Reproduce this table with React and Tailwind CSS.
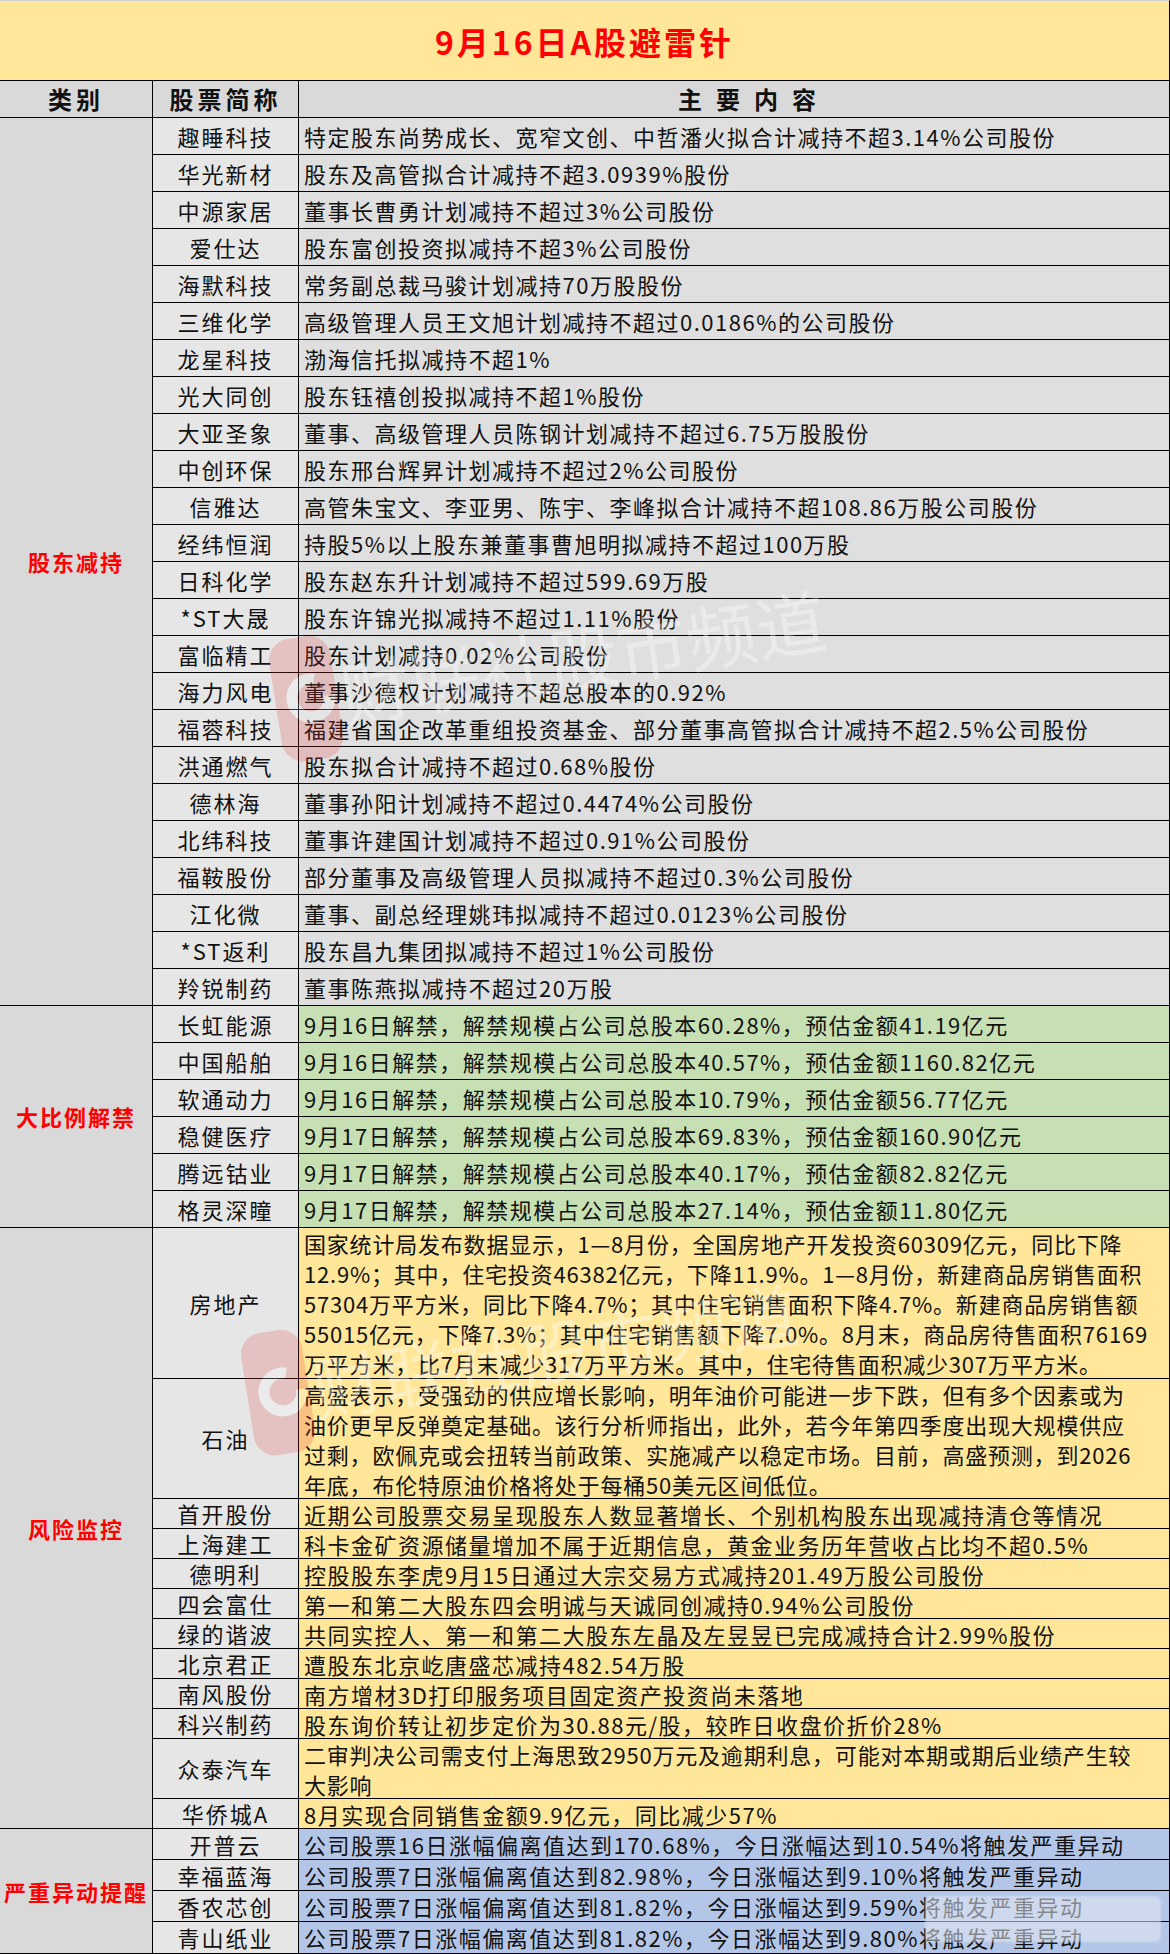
const reduce = [
  ["趣睡科技", "特定股东尚势成长、宽窄文创、中哲潘火拟合计减持不超3.14%公司股份"],
  ["华光新材", "股东及高管拟合计减持不超3.0939%股份"],
  ["中源家居", "董事长曹勇计划减持不超过3%公司股份"],
  ["爱仕达", "股东富创投资拟减持不超3%公司股份"],
  ["海默科技", "常务副总裁马骏计划减持70万股股份"],
  ["三维化学", "高级管理人员王文旭计划减持不超过0.0186%的公司股份"],
  ["龙星科技", "渤海信托拟减持不超1%"],
  ["光大同创", "股东钰禧创投拟减持不超1%股份"],
  ["大亚圣象", "董事、高级管理人员陈钢计划减持不超过6.75万股股份"],
  ["中创环保", "股东邢台辉昇计划减持不超过2%公司股份"],
  ["信雅达", "高管朱宝文、李亚男、陈宇、李峰拟合计减持不超108.86万股公司股份"],
  ["经纬恒润", "持股5%以上股东兼董事曹旭明拟减持不超过100万股"],
  ["日科化学", "股东赵东升计划减持不超过599.69万股"],
  ["*ST大晟", "股东许锦光拟减持不超过1.11%股份"],
  ["富临精工", "股东计划减持0.02%公司股份"],
  ["海力风电", "董事沙德权计划减持不超总股本的0.92%"],
  ["福蓉科技", "福建省国企改革重组投资基金、部分董事高管拟合计减持不超2.5%公司股份"],
  ["洪通燃气", "股东拟合计减持不超过0.68%股份"],
  ["德林海", "董事孙阳计划减持不超过0.4474%公司股份"],
  ["北纬科技", "董事许建国计划减持不超过0.91%公司股份"],
  ["福鞍股份", "部分董事及高级管理人员拟减持不超过0.3%公司股份"],
  ["江化微", "董事、副总经理姚玮拟减持不超过0.0123%公司股份"],
  ["*ST返利", "股东昌九集团拟减持不超过1%公司股份"],
  ["羚锐制药", "董事陈燕拟减持不超过20万股"],
];

const unlock = [
  ["长虹能源", "9月16日解禁，解禁规模占公司总股本60.28%，预估金额41.19亿元"],
  ["中国船舶", "9月16日解禁，解禁规模占公司总股本40.57%，预估金额1160.82亿元"],
  ["软通动力", "9月16日解禁，解禁规模占公司总股本10.79%，预估金额56.77亿元"],
  ["稳健医疗", "9月17日解禁，解禁规模占公司总股本69.83%，预估金额160.90亿元"],
  ["腾远钴业", "9月17日解禁，解禁规模占公司总股本40.17%，预估金额82.82亿元"],
  ["格灵深瞳", "9月17日解禁，解禁规模占公司总股本27.14%，预估金额11.80亿元"],
];

const risk = [
  {
    name: "房地产",
    h: "h-[151px]",
    lines: [
      "国家统计局发布数据显示，1—8月份，全国房地产开发投资60309亿元，同比下降",
      "12.9%；其中，住宅投资46382亿元，下降11.9%。1—8月份，新建商品房销售面积",
      "57304万平方米，同比下降4.7%；其中住宅销售面积下降4.7%。新建商品房销售额",
      "55015亿元，下降7.3%；其中住宅销售额下降7.0%。8月末，商品房待售面积76169",
      "万平方米，比7月末减少317万平方米。其中，住宅待售面积减少307万平方米。",
    ],
  },
  {
    name: "石油",
    h: "h-[120px]",
    lines: [
      "高盛表示，受强劲的供应增长影响，明年油价可能进一步下跌，但有多个因素或为",
      "油价更早反弹奠定基础。该行分析师指出，此外，若今年第四季度出现大规模供应",
      "过剩，欧佩克或会扭转当前政策、实施减产以稳定市场。目前，高盛预测，到2026",
      "年底，布伦特原油价格将处于每桶50美元区间低位。",
    ],
  },
  { name: "首开股份", h: "h-[30px]", lines: ["近期公司股票交易呈现股东人数显著增长、个别机构股东出现减持清仓等情况"] },
  { name: "上海建工", h: "h-[30px]", lines: ["科卡金矿资源储量增加不属于近期信息，黄金业务历年营收占比均不超0.5%"] },
  { name: "德明利", h: "h-[30px]", lines: ["控股股东李虎9月15日通过大宗交易方式减持201.49万股公司股份"] },
  { name: "四会富仕", h: "h-[30px]", lines: ["第一和第二大股东四会明诚与天诚同创减持0.94%公司股份"] },
  { name: "绿的谐波", h: "h-[30px]", lines: ["共同实控人、第一和第二大股东左晶及左昱昱已完成减持合计2.99%股份"] },
  { name: "北京君正", h: "h-[30px]", lines: ["遭股东北京屹唐盛芯减持482.54万股"] },
  { name: "南风股份", h: "h-[30px]", lines: ["南方增材3D打印服务项目固定资产投资尚未落地"] },
  { name: "科兴制药", h: "h-[30px]", lines: ["股东询价转让初步定价为30.88元/股，较昨日收盘价折价28%"] },
  {
    name: "众泰汽车",
    h: "h-[60px]",
    lines: ["二审判决公司需支付上海思致2950万元及逾期利息，可能对本期或期后业绩产生较", "大影响"],
  },
  { name: "华侨城A", h: "h-[30px]", lines: ["8月实现合同销售金额9.9亿元，同比减少57%"] },
];

const alerts = [
  ["开普云", "公司股票16日涨幅偏离值达到170.68%，今日涨幅达到10.54%将触发严重异动", "h-[31px]"],
  ["幸福蓝海", "公司股票7日涨幅偏离值达到82.98%，今日涨幅达到9.10%将触发严重异动", "h-[31px]"],
  ["香农芯创", "公司股票7日涨幅偏离值达到81.82%，今日涨幅达到9.59%将触发严重异动", "h-[31px]"],
  ["青山纸业", "公司股票7日涨幅偏离值达到81.82%，今日涨幅达到9.80%将触发严重异动", "h-[32px]"],
];

const font = "font-['Liberation_Sans_Narrow','Noto_Sans_CJK_SC',sans-serif]";

function Section({ label, children }) {
  return (
    <div className="flex">
      <div className="w-[153px] shrink-0 border-r border-b border-black bg-[#D9D9D9] flex items-center justify-center">
        <span className="text-[#FF0000] text-[22px] font-bold tracking-[2px] whitespace-nowrap">{label}</span>
      </div>
      <div className="flex-1 min-w-0">{children}</div>
    </div>
  );
}

function Row({ name, h, bg, tight, children }) {
  return (
    <div className={`flex border-b border-black ${h}`}>
      <div className="w-[146px] shrink-0 border-r border-black bg-[#E6E6E6] flex items-center justify-center text-[22px] tracking-[2px] whitespace-nowrap">
        {name}
      </div>
      <div
        className={`flex-1 min-w-0 overflow-hidden pl-[5px] flex flex-col justify-center text-[22px] whitespace-nowrap ${
          tight ? "tracking-[0.8px]" : "tracking-[1.5px]"
        } ${bg}`}
      >
        {children}
      </div>
    </div>
  );
}

function Watermark({ className }) {
  return (
    <div className={`absolute pointer-events-none flex items-center gap-[4px] -rotate-[9deg] ${className}`}>
      <svg width="62" height="124" viewBox="0 0 62 124" className="opacity-20">
        <rect x="0" y="0" width="62" height="124" rx="22" fill="#E53935" />
        <circle cx="36" cy="62" r="19" fill="none" stroke="#ffffff" strokeWidth="11" strokeDasharray="95 30" />
      </svg>
      <span className="text-[70px] leading-none font-normal text-white/35 whitespace-nowrap">财联社股市频道</span>
    </div>
  );
}

export default function App() {
  return (
    <div className={`w-[1170px] relative overflow-hidden text-[#111] bg-white ${font}`}>
      <div className="h-[81px] bg-[#FFE699] border-t border-[#cfcfcf] border-b border-b-black border-r border-r-black flex items-center justify-center">
        <span className="text-[#FF0000] text-[32px] font-bold tracking-[3px]">9月16日A股避雷针</span>
      </div>

      <div className="h-[37px] flex border-b border-black border-r border-r-black bg-[#D9D9D9] text-[24px] font-bold">
        <div className="w-[153px] shrink-0 border-r border-black flex items-center justify-center tracking-[4px]">类别</div>
        <div className="w-[146px] shrink-0 border-r border-black flex items-center justify-center tracking-[4px]">股票简称</div>
        <div className="flex-1 flex items-center justify-center pl-[40px] tracking-[14px]">主要内容</div>
      </div>

      <div className="border-r border-black">
        <Section label="股东减持">
          {reduce.map(([n, t]) => (
            <Row key={n} name={n} h="h-[37px]" bg="bg-[#DFDFDF]">
              {t}
            </Row>
          ))}
        </Section>

        <Section label="大比例解禁">
          {unlock.map(([n, t]) => (
            <Row key={n} name={n} h="h-[37px]" bg="bg-[#C6E0B4]">
              {t}
            </Row>
          ))}
        </Section>

        <Section label="风险监控">
          {risk.map((r) => (
            <Row key={r.name} name={r.name} h={r.h} bg="bg-[#FFE699]" tight={r.lines.length > 1}>
              {r.lines.map((l, i) => (
                <div key={i} className="leading-[30px]">
                  {l}
                </div>
              ))}
            </Row>
          ))}
        </Section>

        <Section label="严重异动提醒">
          {alerts.map(([n, t, h]) => (
            <Row key={n} name={n} h={h} bg="bg-[#B4C6E7]">
              {t}
            </Row>
          ))}
        </Section>
      </div>

      <Watermark className="left-[272px] top-[598px]" />
      <Watermark className="left-[244px] top-[1292px]" />

      <div className="absolute left-[925px] top-[1896px] w-[236px] h-[46px] rounded-[6px] bg-[#e4e9f2]/55 blur-[1px] pointer-events-none" />
    </div>
  );
}
